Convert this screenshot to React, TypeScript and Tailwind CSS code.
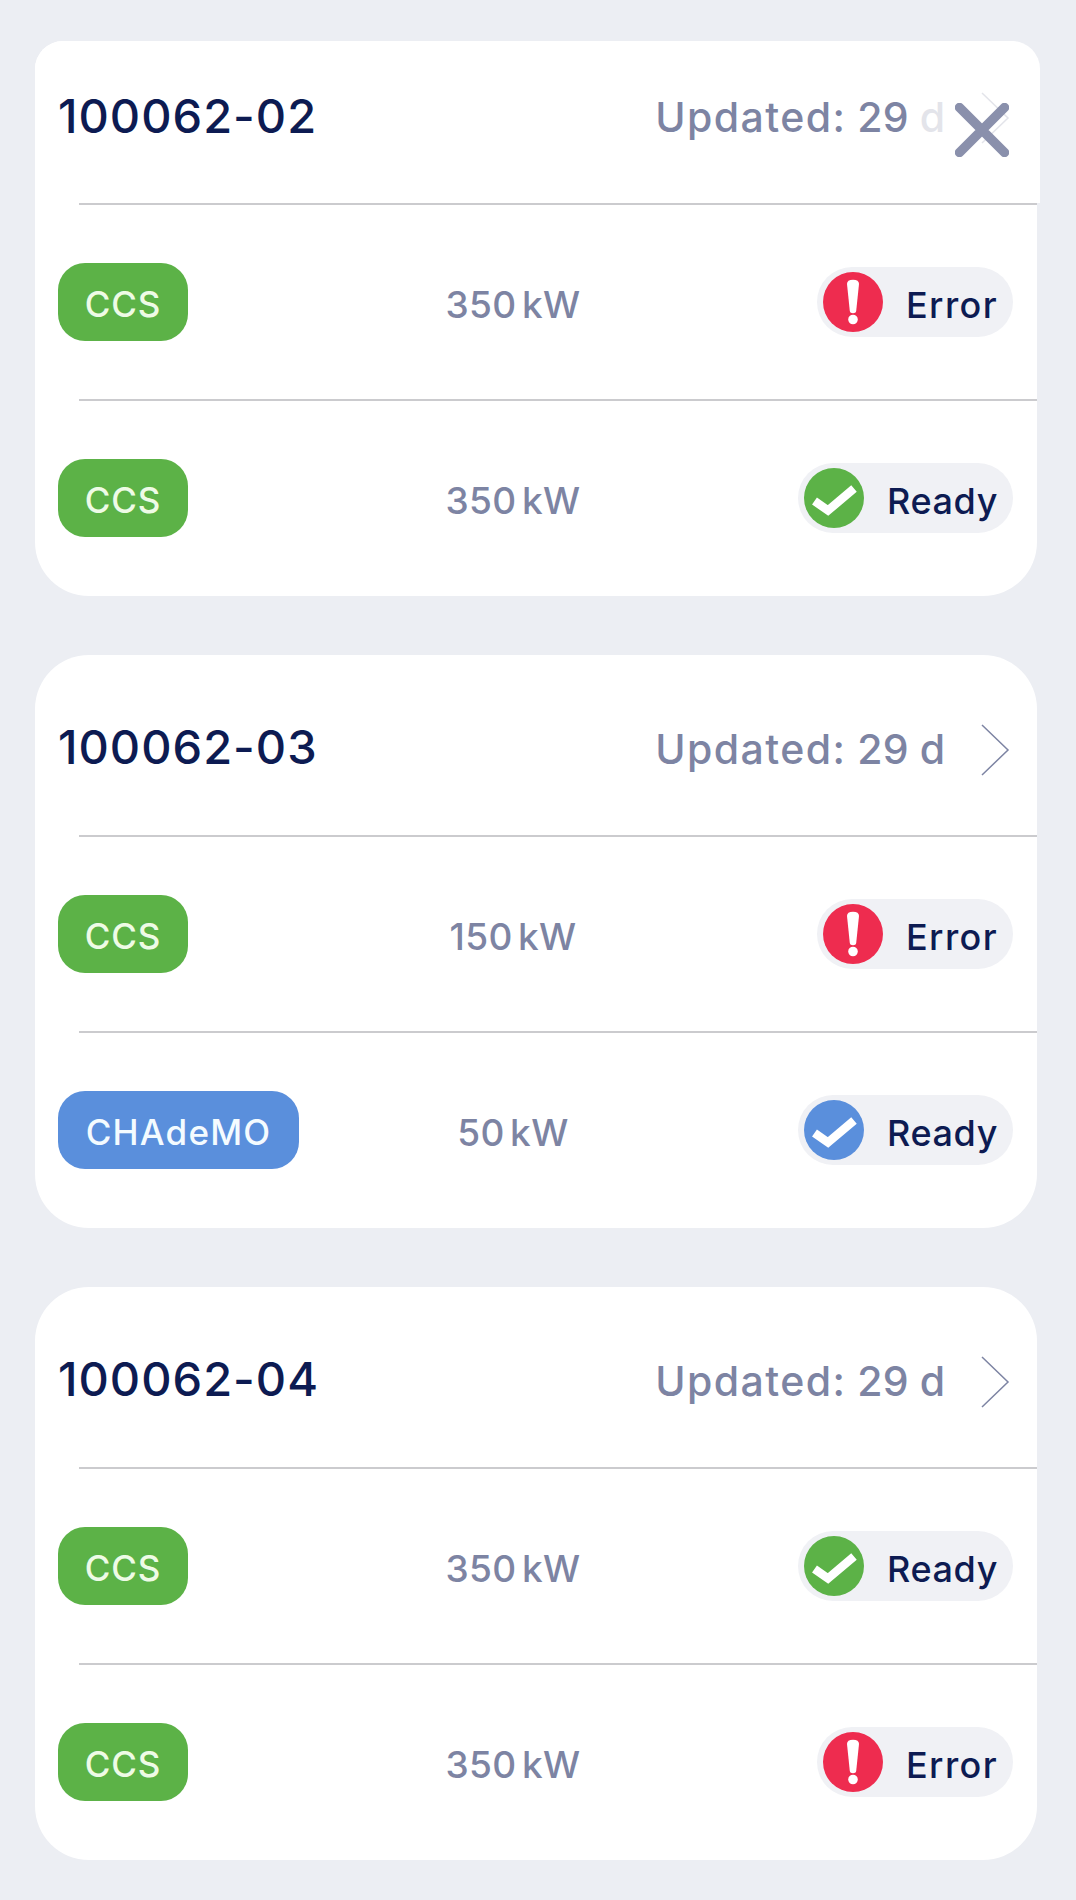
import React from "react";

type Tone = "green" | "blue";
type Row = { plug: string; power: string; status: "Error" | "Ready"; tone?: Tone };
type CardData = { id: string; rows: Row[] };

const cards: CardData[] = [
  {
    id: "100062-02",
    rows: [
      { plug: "CCS", power: "350 kW", status: "Error" },
      { plug: "CCS", power: "350 kW", status: "Ready", tone: "green" },
    ],
  },
  {
    id: "100062-03",
    rows: [
      { plug: "CCS", power: "150 kW", status: "Error" },
      { plug: "CHAdeMO", power: "50 kW", status: "Ready", tone: "blue" },
    ],
  },
  {
    id: "100062-04",
    rows: [
      { plug: "CCS", power: "350 kW", status: "Ready", tone: "green" },
      { plug: "CCS", power: "350 kW", status: "Error" },
    ],
  },
];

function ErrorIcon() {
  return (
    <svg width="60" height="60" viewBox="0 0 60 60" className="shrink-0">
      <circle cx="30" cy="30" r="30" fill="#ee2c4f" />
      <path d="M24 12c0-2.800 2-4.300 6-4.300s6 1.500 6 4.300L33.200 39c-.2 1.500-1.400 2.200-3.200 2.200s-3-.7-3.200-2.200z" fill="#fff" />
      <circle cx="30" cy="47.500" r="4.800" fill="#fff" />
    </svg>
  );
}

function CheckIcon({ tone }: { tone: Tone }) {
  return (
    <svg width="60" height="60" viewBox="0 0 60 60" className="shrink-0">
      <circle cx="30" cy="30" r="30" fill={tone === "green" ? "#5cb247" : "#5a8fdc"} />
      <path d="M10.500 33L24 42.500 50 20.500" fill="none" stroke="#fff" strokeWidth="8.500" strokeLinejoin="miter" />
    </svg>
  );
}

function Chevron({ faint }: { faint?: boolean }) {
  return (
    <svg width="30" height="54" viewBox="0 0 30 54" className="shrink-0">
      <path d="M2 2l26 25L2 52" fill="none" stroke={faint ? "#e3e4ea" : "#7d84a3"} strokeWidth="1.500" />
    </svg>
  );
}

function StatusRow({ row }: { row: Row }) {
  const isBlue = row.tone === "blue";
  return (
    <div className="flex flex-col">
      <div className="ml-[44px] h-[2px] bg-[#cbcbce]" />
      <div className="flex h-[194px] items-center pl-[23px] pr-[24px]">
        <div className="w-[330px] shrink-0">
          <span
            className={
              isBlue
                ? "inline-flex h-[78px] w-[241px] items-center justify-center rounded-[27px] bg-[#5a8fdc] pt-[5px] text-[35px] font-medium tracking-[1.2px] text-[#f4fbff]"
                : "inline-flex h-[78px] w-[130px] items-center justify-center rounded-[27px] bg-[#5cb247] pt-[5px] text-[35px] font-medium tracking-[0.9px] text-[#eefbe6]"
            }
          >
            {row.plug}
          </span>
        </div>
        <div className="w-[250px] shrink-0 pt-[5px] text-center text-[37px] font-medium tracking-[0.4px] text-[#7d84a3] [word-spacing:-5px]">
          {row.power}
        </div>
        <div className="flex flex-1 justify-end">
          <div className="flex h-[70px] items-center gap-[23px] rounded-full bg-[#f0f1f5] pl-[6px] pr-[15px]">
            {row.status === "Error" ? <ErrorIcon /> : <CheckIcon tone={row.tone ?? "green"} />}
            <span
              className={
                row.status === "Error"
                  ? "pt-[5px] text-[36px] font-medium tracking-[1.4px] text-[#0d1b52]"
                  : "pt-[5px] text-[36px] font-medium tracking-[0.6px] text-[#0d1b52]"
              }
            >
              {row.status}
            </span>
          </div>
        </div>
      </div>
    </div>
  );
}

function Card({ data, first }: { data: CardData; first: boolean }) {
  return (
    <section
      className={
        first
          ? "relative rounded-t-[28px] rounded-b-[54px] bg-white pb-[1px]"
          : "relative rounded-[54px] bg-white pb-[1px]"
      }
    >
      <header
        className={
          first
            ? "-mr-[3px] flex h-[162px] items-center rounded-t-[28px] bg-white pb-[17px] pl-[23px] pr-[30px]"
            : "flex h-[180px] items-center pl-[23px] pr-[27px]"
        }
      >
        <h2 className="mt-[5px] flex-1 text-[47px] font-medium tracking-[1px] text-[#0d1b52]">{data.id}</h2>
        <div className="mt-[9px] flex items-center gap-[35px]">
          <span className="text-[41px] font-medium text-[#7d84a3]">
            <span className="tracking-[1.4px]">Updated:</span> <span className="tracking-[0.2px]">29</span>{" "}
            <span className={first ? "text-[#e3e4ea]" : ""}>d</span>
          </span>
          <Chevron faint={first} />
        </div>
      </header>
      {data.rows.map((r, i) => (
        <StatusRow key={i} row={r} />
      ))}
      {first && (
        <svg width="54" height="54" viewBox="0 0 54 54" className="absolute right-[28px] top-[62px]">
          <path d="M4.500 4.500l45 45M49.500 4.500l-45 45" stroke="#8a90ac" strokeWidth="9.500" strokeLinecap="round" />
        </svg>
      )}
    </section>
  );
}

export default function App() {
  return (
    <div
      className="flex min-h-[1900px] flex-col gap-[59px] bg-[#eceef3] pb-[40px] pl-[35px] pr-[39px] pt-[41px]"
      style={{ fontFamily: '"Inter", "Liberation Sans", sans-serif' }}
    >
      {cards.map((c, i) => (
        <Card key={c.id} data={c} first={i === 0} />
      ))}
    </div>
  );
}
